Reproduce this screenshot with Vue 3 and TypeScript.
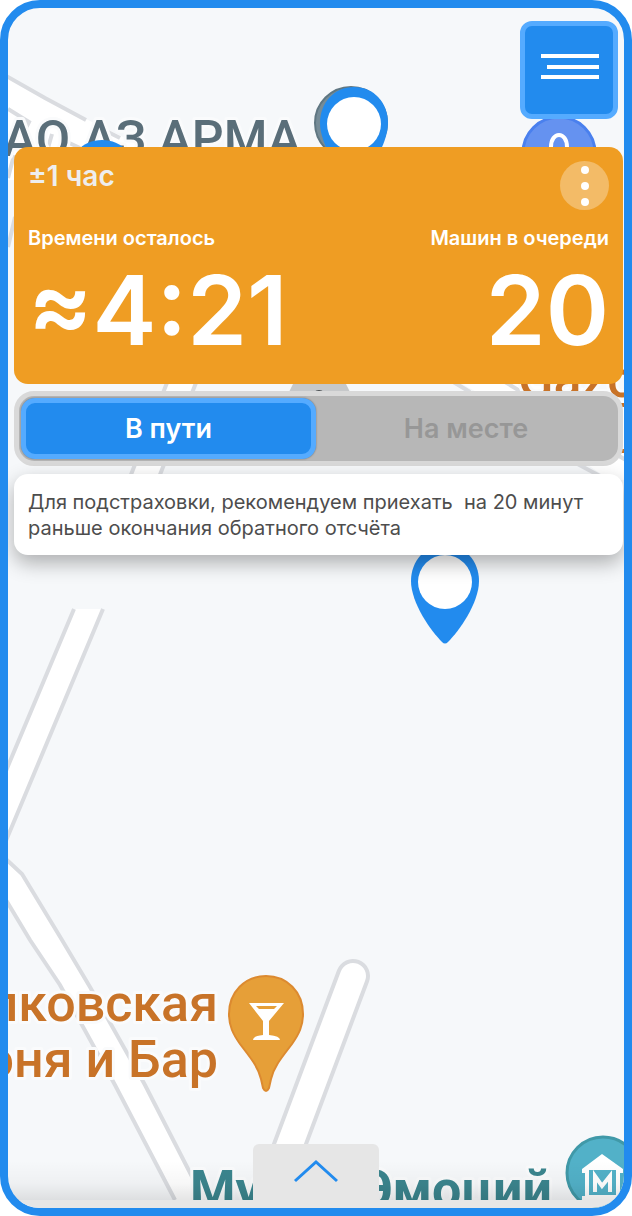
<script setup lang="ts">
import { ref } from 'vue'

type Status = 'way' | 'place'

const status = ref<Status>('way')
const options: { value: Status; label: string }[] = [
  { value: 'way', label: 'В пути' },
  { value: 'place', label: 'На месте' },
]
const pins = [
  { x: 354, y: 123 },
  { x: 102, y: 176 },
  { x: 445, y: 581 },
]
</script>

<template>
  <main class="screen">
    <svg class="map" viewBox="8 8 616 1200" preserveAspectRatio="xMinYMin slice" role="img" aria-label="Карта">
      <g class="road">
        <path class="fill" d="M0 72 L45 98 L90 121 L150 150 L150 180 L0 180Z" />
        <path d="M4 75 L8 77 L45 98 L86 120 M104 130 L120 138 M8 109 L29 122 L23 134 M52 134 L46 155 M65 141 L80 148 M14 155 L8 178 M15 217 L8 247" />
        <path class="fill" d="M172 370 L125 490 H154 L201 370Z" />
        <path d="M172 370 L125 490 M201 370 L154 490" />
        <path class="fill" d="M74 609 L0 780 V855 L103 609Z" />
        <path d="M74 609 L0 785 M103 609 L0 855" />
        <path class="fill" d="M0 853 L8 861 L22 874 L62 940 L90 987 L145 1085 L204 1200 H175 L115 1085 L60 985 L30 940 L0 890Z" />
        <path d="M0 853 L8 861 L22 874 L62 940 L90 987 L145 1085 L204 1200 M0 890 L30 940 L60 985 L115 1085 L175 1200" />
        <path class="fill" d="M455 380 L500 405 L610 480 H640 V400 L500 370Z" />
        <path d="M450 380 L470 392 M505 382 L525 394 M570 460 L600 476 M612 452 L626 460" />
        <path class="lane-edge" d="M353 976 L284 1160" />
        <path class="lane" d="M353 976 L284 1160" />
      </g>

      <path class="grey-pin" d="M297 376 L289 392 H350 L342 376Z" />
      <circle cx="319" cy="397" r="7" fill="#4b4f52" />

      <text class="label slate" x="301" y="156" text-anchor="end">АО АЗ АРМА</text>
      <text class="label orange" x="518" y="397">Gazo</text>
      <path d="M621 405 H626 M621 451 H626" stroke="#c87328" stroke-width="4" />
      <text class="label orange" x="218" y="1021" text-anchor="end">лковская</text>
      <text class="label orange" x="218" y="1077" text-anchor="end">оня и Бар</text>
      <text class="label teal" x="552" y="1207" text-anchor="end">Музей Эмоций</text>

      <circle cx="351" cy="123" r="36" fill="#768c97" stroke="#607782" stroke-width="2" />
      <circle cx="559" cy="153" r="36" fill="#6592f0" stroke="#4a80ee" stroke-width="3" />
      <path d="M551 156 V147 C551 131 567 131 567 147 V156" fill="none" stroke="#fff" stroke-width="4" />

      <g v-for="pin in pins" :key="pin.x" :transform="`translate(${pin.x} ${pin.y})`">
        <path class="pin" d="M0 -36 C20 -36 34 -20 34 0 C34 22 14 50 3 61 Q0 64 -3 61 C-14 50 -34 22 -34 0 C-34 -20 -20 -36 0 -36Z" />
        <circle cy="1" r="27" fill="#fff" />
      </g>

      <path d="M266 976 C287 976 303 992 303 1014 C303 1026 299 1034 292 1044 C283 1056 274 1066 271 1079 L269 1088 Q266 1094 263 1088 L261 1079 C258 1066 249 1056 240 1044 C233 1034 229 1026 229 1014 C229 992 245 976 266 976Z" fill="#e69f38" stroke="#dc8a30" stroke-width="2" />
      <path fill="#fff" fill-rule="evenodd" d="M249 1003 H284 L269 1021 V1035 Q280 1036 280 1040 H253 Q253 1036 263 1035 V1021Z M256 1006 L259 1009 H274 L277 1006Z" />

      <circle cx="603" cy="1173" r="36" fill="#52b1c8" stroke="#4099a8" stroke-width="3" />
      <path fill="#fff" fill-rule="evenodd" d="M602 1154 L623 1169 V1173 H620 V1195 H624 V1200 H582 V1196 H585 V1173 H582 V1169Z M589 1170 V1195 H616 V1170Z" />
      <path d="M595 1192 V1176 L602 1186 L610 1176 V1192" fill="none" stroke="#fff" stroke-width="4" />
    </svg>

    <header class="top">
      <button class="menu" type="button" aria-label="Меню">
        <svg width="60" height="26" viewBox="0 0 60 26" aria-hidden="true">
          <path d="M2 2 H60 M8 13 H60 M2 23 H60" fill="none" stroke="#fff" stroke-width="4" />
        </svg>
      </button>
    </header>

    <div class="panels">
      <section class="queue">
        <div class="row">
          <span class="margin">±1 час</span>
          <button class="more" type="button" aria-label="Ещё">
            <svg width="10" height="42" viewBox="0 0 10 42" fill="#fff" aria-hidden="true">
              <circle cx="5" cy="5" r="4" />
              <circle cx="5" cy="21" r="4" />
              <circle cx="5" cy="37" r="4" />
            </svg>
          </button>
        </div>
        <div class="row stats">
          <div class="stat">
            <span class="caption">Времени осталось</span>
            <strong class="value">≈4:21</strong>
          </div>
          <div class="stat end">
            <span class="caption">Машин в очереди</span>
            <strong class="value">20</strong>
          </div>
        </div>
      </section>

      <div class="switch" role="group" aria-label="Статус">
        <button
          v-for="option in options"
          :key="option.value"
          type="button"
          class="option"
          :class="{ active: status === option.value }"
          :aria-pressed="status === option.value"
          @click="status = option.value"
        >
          {{ option.label }}
        </button>
      </div>

      <p class="note">Для подстраховки, рекомендуем приехать&nbsp; на 20 минут раньше окончания обратного отсчёта</p>
    </div>

    <footer class="drawer">
      <button class="handle" type="button" aria-label="Развернуть">
        <svg width="46" height="24" viewBox="0 0 46 24" aria-hidden="true">
          <path d="M2 22 L23 3 L44 22" fill="none" stroke="#228bee" stroke-width="3" />
        </svg>
      </button>
    </footer>
  </main>
</template>

<style>
body {
  margin: 0;
  background: #fff;
}
</style>

<style scoped>
.screen {
  position: relative;
  display: flex;
  flex-direction: column;
  box-sizing: border-box;
  min-height: 100vh;
  overflow: hidden;
  border: 8px solid #228bee;
  border-radius: 40px;
  background: #f6f8fa;
  font-family: Inter, "Liberation Sans", sans-serif;
}
.map {
  position: absolute;
  inset: 0;
  width: 100%;
  height: 100%;
}
.road path {
  fill: none;
  stroke: #dadce0;
  stroke-width: 4;
}
.road .fill {
  fill: #fff;
  stroke: none;
}
.road .lane-edge {
  stroke-width: 34;
  stroke-linecap: round;
}
.road .lane {
  stroke: #fff;
  stroke-width: 26;
  stroke-linecap: round;
}
.grey-pin {
  fill: #c6c8ca;
}
.label {
  font: 500 52px Roboto, "Liberation Sans", sans-serif;
  stroke: #fafbfc;
  stroke-width: 6px;
  stroke-linejoin: round;
  paint-order: stroke;
}
.slate {
  fill: #5a6e79;
  font-size: 50px;
}
.orange {
  fill: #c87328;
}
.teal {
  fill: #3b858e;
  font-weight: 700;
}
.pin {
  fill: #228bee;
}
.top {
  position: relative;
  display: flex;
  justify-content: flex-end;
  padding: 13px 6px 28px;
}
button {
  padding: 0;
  border: 0;
  font: inherit;
  cursor: pointer;
}
.menu {
  display: flex;
  justify-content: center;
  box-sizing: border-box;
  width: 98px;
  height: 98px;
  padding-top: 28px;
  border: 5px solid #55abff;
  border-radius: 12px;
  background: #228bee;
}
.panels {
  position: relative;
  display: flex;
  flex-direction: column;
  gap: 7px;
  margin: 0 1px 0 6px;
}
.queue {
  box-sizing: border-box;
  min-height: 237px;
  padding: 14px 14px 0;
  border-radius: 14px;
  background: #ef9d23;
  color: #fff;
}
.row {
  display: flex;
  justify-content: space-between;
}
.margin {
  color: #eee;
  font-size: 28px;
  font-weight: 600;
  line-height: 30px;
}
.more {
  display: flex;
  align-items: center;
  justify-content: center;
  width: 49px;
  height: 49px;
  border-radius: 50%;
  background: #f3bb67;
}
.stats {
  padding-top: 14px;
}
.stat {
  display: flex;
  flex-direction: column;
}
.end {
  align-items: flex-end;
}
.caption {
  font-size: 20px;
  font-weight: 600;
  line-height: 28px;
}
.value {
  font-size: 96px;
  font-weight: 600;
  line-height: 116px;
}
.switch {
  display: grid;
  grid-template-columns: 295fr 300fr;
  box-sizing: border-box;
  min-height: 75px;
  padding: 2px;
  border: 5px solid #d9d9d9;
  border-radius: 20px;
  background: #b7b7b7;
}
.option {
  border: 5px solid transparent;
  border-radius: 14px;
  background: none;
  color: #979797;
  font-size: 27px;
  font-weight: 600;
}
.option.active {
  border-color: #55abff;
  background: #228bee;
  color: #fff;
  box-shadow: 0 0 2px rgba(0, 0, 0, 0.4);
}
.note {
  margin: 1px 0 0;
  padding: 15px 14px 14px;
  border-radius: 14px;
  background: #fff;
  box-shadow: 0 8px 20px rgba(0, 0, 0, 0.3);
  color: #4d4d4d;
  font-size: 20px;
  line-height: 26px;
}
.drawer {
  position: relative;
  display: flex;
  justify-content: center;
  margin-top: auto;
  border-bottom: 8px solid #e6e6e6;
  background: linear-gradient(to bottom, rgba(0, 0, 0, 0) 30%, rgba(0, 0, 0, 0.03) 70%, rgba(0, 0, 0, 0.1)) padding-box;
}
.handle {
  display: flex;
  justify-content: center;
  width: 126px;
  height: 56px;
  padding-top: 15px;
  border-radius: 6px 6px 0 0;
  background: #e6e6e6;
}
</style>
